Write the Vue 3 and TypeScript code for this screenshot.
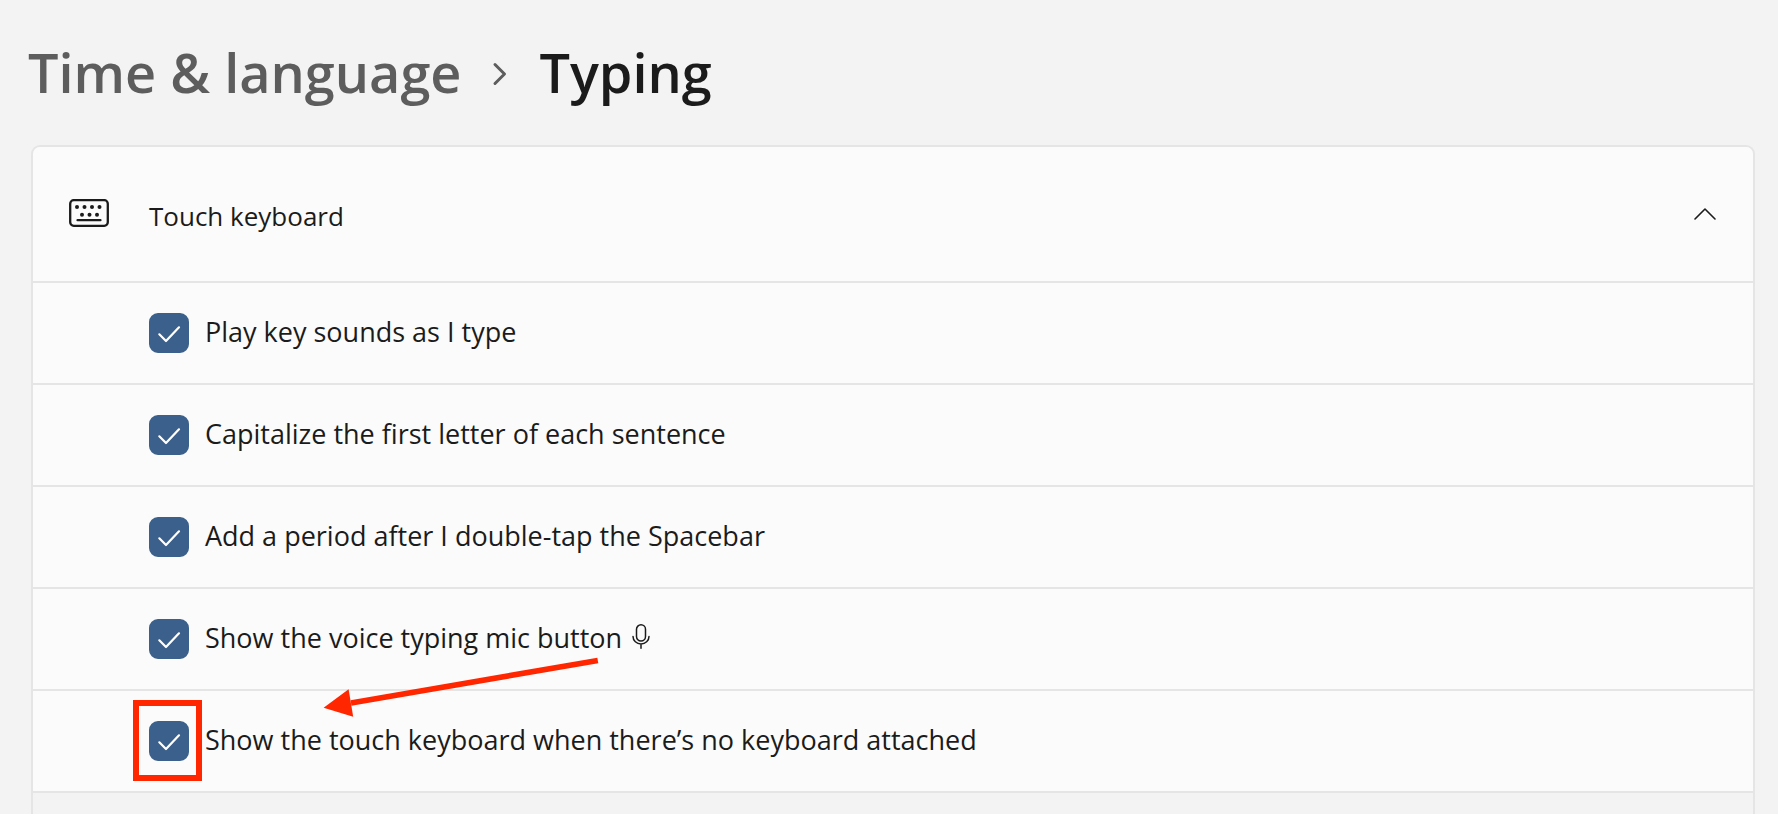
<script setup lang="ts">
import { ref } from 'vue'

interface Option {
  id: string
  label: string
  checked: boolean
  mic?: boolean
  highlighted?: boolean
}

const expanded = ref(true)

const options = ref<Option[]>([
  { id: 'key-sounds', label: 'Play key sounds as I type', checked: true },
  { id: 'capitalize', label: 'Capitalize the first letter of each sentence', checked: true },
  { id: 'period', label: 'Add a period after I double-tap the Spacebar', checked: true },
  { id: 'voice', label: 'Show the voice typing mic button', checked: true, mic: true },
  {
    id: 'no-keyboard',
    label: 'Show the touch keyboard when there’s no keyboard attached',
    checked: true,
    highlighted: true,
  },
])
</script>

<template>
  <main class="page">
    <nav class="breadcrumb" aria-label="Breadcrumb">
      <a class="parent" href="#">Time &amp; language</a>
      <svg class="separator" width="16" height="24" viewBox="0 0 16 24" aria-hidden="true">
        <path d="M3 2.500L12.500 12L3 21.500" fill="none" stroke="#5d5d5d" stroke-width="3" stroke-linecap="round" stroke-linejoin="round" />
      </svg>
      <h1 class="current">Typing</h1>
    </nav>

    <section class="card">
      <button class="card-header" type="button" :aria-expanded="expanded" @click="expanded = !expanded">
        <svg class="keyboard" width="40" height="30" viewBox="0 0 40 30" aria-hidden="true">
          <rect x="1.200" y="1.200" width="37.600" height="25.600" rx="3.500" fill="none" stroke="#1b1b1b" stroke-width="2.300" />
          <g fill="#1b1b1b">
            <circle cx="8" cy="8" r="2" />
            <circle cx="15.500" cy="8" r="2" />
            <circle cx="23" cy="8" r="2" />
            <circle cx="30.500" cy="8" r="2" />
            <circle cx="13" cy="15.700" r="2" />
            <circle cx="20.500" cy="15.700" r="2" />
            <circle cx="28" cy="15.700" r="2" />
          </g>
          <path d="M8.500 21.200H31.500" stroke="#1b1b1b" stroke-width="2.200" stroke-linecap="round" />
        </svg>
        <span class="card-title">Touch keyboard</span>
        <svg class="chevron" :class="{ closed: !expanded }" width="22" height="12" viewBox="0 0 22 12" aria-hidden="true">
          <path d="M1 11L11 1L21 11" fill="none" stroke="#1b1b1b" stroke-width="1.600" stroke-linecap="round" stroke-linejoin="round" />
        </svg>
      </button>

      <template v-if="expanded">
        <div v-for="option in options" :key="option.id" class="row">
          <span class="check">
            <input :id="option.id" v-model="option.checked" type="checkbox" />
            <svg v-if="option.checked" class="tick" width="40" height="40" viewBox="0 0 40 40" aria-hidden="true">
              <path d="M10.300 21.300L17 28L30 14.300" fill="none" stroke="#fff" stroke-width="2.200" stroke-linecap="round" stroke-linejoin="round" />
            </svg>
            <span v-if="option.highlighted" class="highlight"></span>
          </span>
          <label :for="option.id">{{ option.label }}</label>
          <svg v-if="option.mic" class="mic" width="18" height="30" viewBox="0 0 18 30" aria-hidden="true">
            <g fill="none" stroke="#1b1b1b" stroke-width="1.500" stroke-linecap="round">
              <rect x="4.500" y="0.800" width="9" height="16.200" rx="4.500" />
              <path d="M1 12.500A8 7.500 0 0 0 17 12.500M9 20V24.200" />
            </g>
          </svg>
          <svg v-if="option.highlighted" class="arrow" width="276" height="60" viewBox="0 0 276 60" aria-hidden="true">
            <path d="M274.800 3.500L28 46" stroke="#ff2600" stroke-width="5.600" />
            <path d="M0.600 50.700L25.600 32.300L30.200 59.700Z" fill="#ff2600" />
          </svg>
        </div>
      </template>

      <div class="rest"></div>
    </section>
  </main>
</template>

<style>
body {
  margin: 0;
  background: #f3f3f3;
}
</style>

<style scoped>
.page {
  box-sizing: border-box;
  display: flex;
  flex-direction: column;
  min-height: 100vh;
  padding: 30px 23px 0 31px;
  background: #f3f3f3;
  color: #1b1b1b;
  font-family: "Open Sans", "Noto Sans", sans-serif;
  font-size: 27px;
  line-height: 36px;
}

.breadcrumb {
  display: flex;
  align-items: center;
  gap: 31px;
  height: 84px;
  margin: 0 0 31px -3px;
  font-size: 54px;
  line-height: 84px;
  font-weight: 600;
}

.parent {
  color: #5d5d5d;
  text-decoration: none;
}

.separator {
  padding-top: 4px;
}

.current {
  margin: 0;
  font: inherit;
}

.card {
  flex: 1;
  display: flex;
  flex-direction: column;
  border: 2px solid #e5e5e5;
  border-bottom: 0;
  border-radius: 9px 9px 0 0;
}

.card-header {
  display: flex;
  align-items: center;
  height: 134px;
  padding: 0 37px 0 36px;
  border: 0;
  border-radius: 7px 7px 0 0;
  background: #fbfbfb;
  color: inherit;
  font: inherit;
  font-size: 26px;
  text-align: left;
}

.card-title {
  flex: 1;
  margin-left: 40px;
  padding-top: 4px;
}

.chevron.closed {
  transform: rotate(180deg);
}

.row {
  position: relative;
  display: flex;
  align-items: center;
  height: 100px;
  padding-left: 116px;
  border-top: 2px solid #e5e5e5;
  background: #fbfbfb;
}

.row label {
  padding-bottom: 2px;
}

.check {
  position: relative;
  width: 40px;
  height: 40px;
  margin-right: 16px;
}

.check input {
  appearance: none;
  display: block;
  width: 40px;
  height: 40px;
  margin: 0;
  border: 2px solid #8a8a8a;
  border-radius: 9px;
  background: #fff;
}

.check input:checked {
  border-color: #3b608b;
  background: #3b608b;
}

.tick {
  position: absolute;
  inset: 0;
  pointer-events: none;
}

.highlight {
  position: absolute;
  inset: -21px -13px -20px -16px;
  border: 6px solid #ff2600;
  pointer-events: none;
}

.mic {
  margin-left: 10px;
}

.arrow {
  position: absolute;
  left: 290px;
  top: -34px;
  pointer-events: none;
}

.rest {
  flex: 1;
  border-top: 2px solid #e5e5e5;
}
</style>
